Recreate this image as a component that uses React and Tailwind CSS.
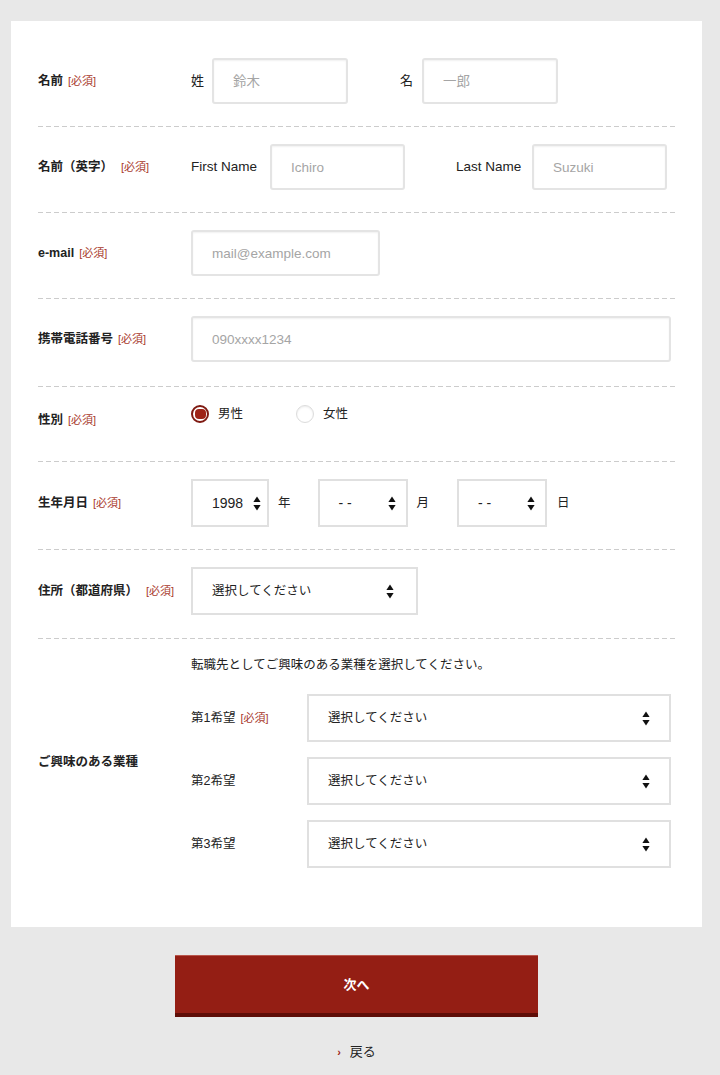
import React from 'react';

const FONT = "font-['Liberation_Sans','Noto_Sans_CJK_JP',sans-serif]";

function Required({ ml = 'ml-[5px]' }) {
  return <span className={`${ml} text-[11px] font-normal text-[#a8392c]`}>[必須]</span>;
}

function Divider() {
  return (
    <div className="h-px bg-[linear-gradient(to_right,#cccccc_5px,transparent_5px)] bg-[length:8px_1px] bg-repeat-x" />
  );
}

function TextInput({ placeholder, width }) {
  return (
    <input
      type="text"
      placeholder={placeholder}
      className={`${width} h-[46px] rounded-[3px] border-2 border-[#e4e4e4] bg-white px-[19px] text-[13.5px] text-[#333] placeholder:text-[#a5a5a5] shadow-[inset_0_1px_2px_rgba(0,0,0,0.06)] outline-none`}
    />
  );
}

function Arrows() {
  return (
    <svg width="8" height="15" viewBox="0 0 8 15" className="shrink-0">
      <path d="M4 0.5 L7.6 6 L0.4 6 Z" fill="#111" />
      <path d="M4 14.5 L7.6 9 L0.4 9 Z" fill="#111" />
    </svg>
  );
}

function Select({ value, width, height = 'h-[48px]', pl = 'pl-[20px]', pr = 'pr-[20px]', size = 'text-[12.5px]' }) {
  return (
    <div
      className={`${width} ${height} ${pl} ${pr} ${size} flex items-center justify-between border-2 border-[#e0e0e0] bg-white text-[#222]`}
    >
      <span>{value}</span>
      <Arrows />
    </div>
  );
}

function Radio({ checked, label }) {
  return (
    <div className="flex items-center">
      {checked ? (
        <span className="flex h-[18px] w-[18px] items-center justify-center rounded-full border-2 border-[#7f1a12] bg-white">
          <span className="h-[10px] w-[11px] rounded-[4px] bg-[#9e2317]" />
        </span>
      ) : (
        <span className="h-[18px] w-[18px] rounded-full border border-[#dcdcdc] bg-white shadow-[inset_0_1px_2px_rgba(0,0,0,0.08)]" />
      )}
      <span className="ml-[9px] text-[12.5px] text-[#222]">{label}</span>
    </div>
  );
}

function Row({ label, children, first, pb = 'pb-[22px]' }) {
  return (
    <div className={`flex items-center ${first ? 'pt-[37px]' : 'pt-[17px]'} ${pb}`}>
      <div className="w-[153px] shrink-0 text-[12.5px] font-bold text-[#222]">{label}</div>
      <div className="flex-1">{children}</div>
    </div>
  );
}

export default function App() {
  return (
    <div className={`min-h-screen bg-[#e8e8e8] pt-[21px] pb-[20px] ${FONT}`}>
      <div className="ml-[11px] w-[691px] bg-white px-[27px] pb-[37px]">
        <Row
          first
          label={
            <>
              名前<Required />
            </>
          }
        >
          <div className="flex items-center text-[13px] text-[#222]">
            <span className="mr-[8px]">姓</span>
            <TextInput placeholder="鈴木" width="w-[136px]" />
            <span className="ml-[52px] mr-[9px]">名</span>
            <TextInput placeholder="一郎" width="w-[136px]" />
          </div>
        </Row>
        <Divider />

        <Row
          label={
            <>
              名前（英字）<Required ml="ml-[8px]" />
            </>
          }
        >
          <div className="flex items-center text-[13.5px] text-[#222]">
            <span className="w-[79px] shrink-0">First Name</span>
            <TextInput placeholder="Ichiro" width="w-[135px]" />
            <span className="ml-[51px] w-[76px] shrink-0">Last Name</span>
            <TextInput placeholder="Suzuki" width="w-[135px]" />
          </div>
        </Row>
        <Divider />

        <Row
          label={
            <>
              e-mail<Required />
            </>
          }
        >
          <TextInput placeholder="mail@example.com" width="w-[189px]" />
        </Row>
        <Divider />

        <Row
          label={
            <>
              携帯電話番号<Required />
            </>
          }
          pb="pb-[24px]"
        >
          <TextInput placeholder="090xxxx1234" width="w-[480px]" />
        </Row>
        <Divider />

        <div className="flex items-center pt-[18px] pb-[22px]">
          <div className="w-[153px] shrink-0 pb-[4px] text-[12.5px] font-bold text-[#222]">
            性別<Required />
          </div>
          <div className="flex h-[34px] flex-1 items-start gap-[53px]">
            <Radio checked label="男性" />
            <Radio label="女性" />
          </div>
        </div>
        <Divider />

        <Row
          label={
            <>
              生年月日<Required />
            </>
          }
        >
          <div className="flex items-center text-[12.5px] text-[#222]">
            <Select value="1998" width="w-[78px]" pl="pl-[19px]" pr="pr-[6px]" size="text-[14px]" />
            <span className="ml-[9px] mr-[27px]">年</span>
            <Select value="- -" width="w-[90px]" pl="pl-[19px]" pr="pr-[10px]" size="text-[14px]" />
            <span className="ml-[9px] mr-[28px]">月</span>
            <Select value="- -" width="w-[90px]" pl="pl-[19px]" pr="pr-[10px]" size="text-[14px]" />
            <span className="ml-[10px]">日</span>
          </div>
        </Row>
        <Divider />

        <Row
          label={
            <>
              住所（都道府県）<Required ml="ml-[8px]" />
            </>
          }
          pb="pb-[23px]"
        >
          <Select value="選択してください" width="w-[227px]" height="h-[48px]" pl="pl-[19px]" pr="pr-[22px]" />
        </Row>
        <Divider />

        <Row label="ご興味のある業種">
          <div className="text-[12.5px] text-[#222]">
            <p className="leading-[18px]">転職先としてご興味のある業種を選択してください。</p>
            <div className="mt-[20px] flex flex-col gap-[15px]">
              {['第1希望', '第2希望', '第3希望'].map((h, i) => (
                <div key={h} className="flex items-center">
                  <div className="w-[116px] shrink-0">
                    {h}
                    {i === 0 && <Required />}
                  </div>
                  <Select value="選択してください" width="w-[364px]" height="h-[48px]" pl="pl-[19px]" pr="pr-[19px]" />
                </div>
              ))}
            </div>
          </div>
        </Row>
      </div>

      <div className="ml-[11px] w-[691px] pt-[28px] flex flex-col items-center">
        <button className="h-[62px] w-[363px] border-t border-[#b8564c] border-b-[4px] border-b-[#5e0d07] bg-[#941e14] text-[13px] font-bold text-white">
          次へ
        </button>
        <div className="mt-[25px] flex items-center text-[13px] text-[#222]">
          <span className="mr-[9px] text-[11px] font-bold text-[#9e2317]">›</span>
          戻る
        </div>
      </div>
    </div>
  );
}
